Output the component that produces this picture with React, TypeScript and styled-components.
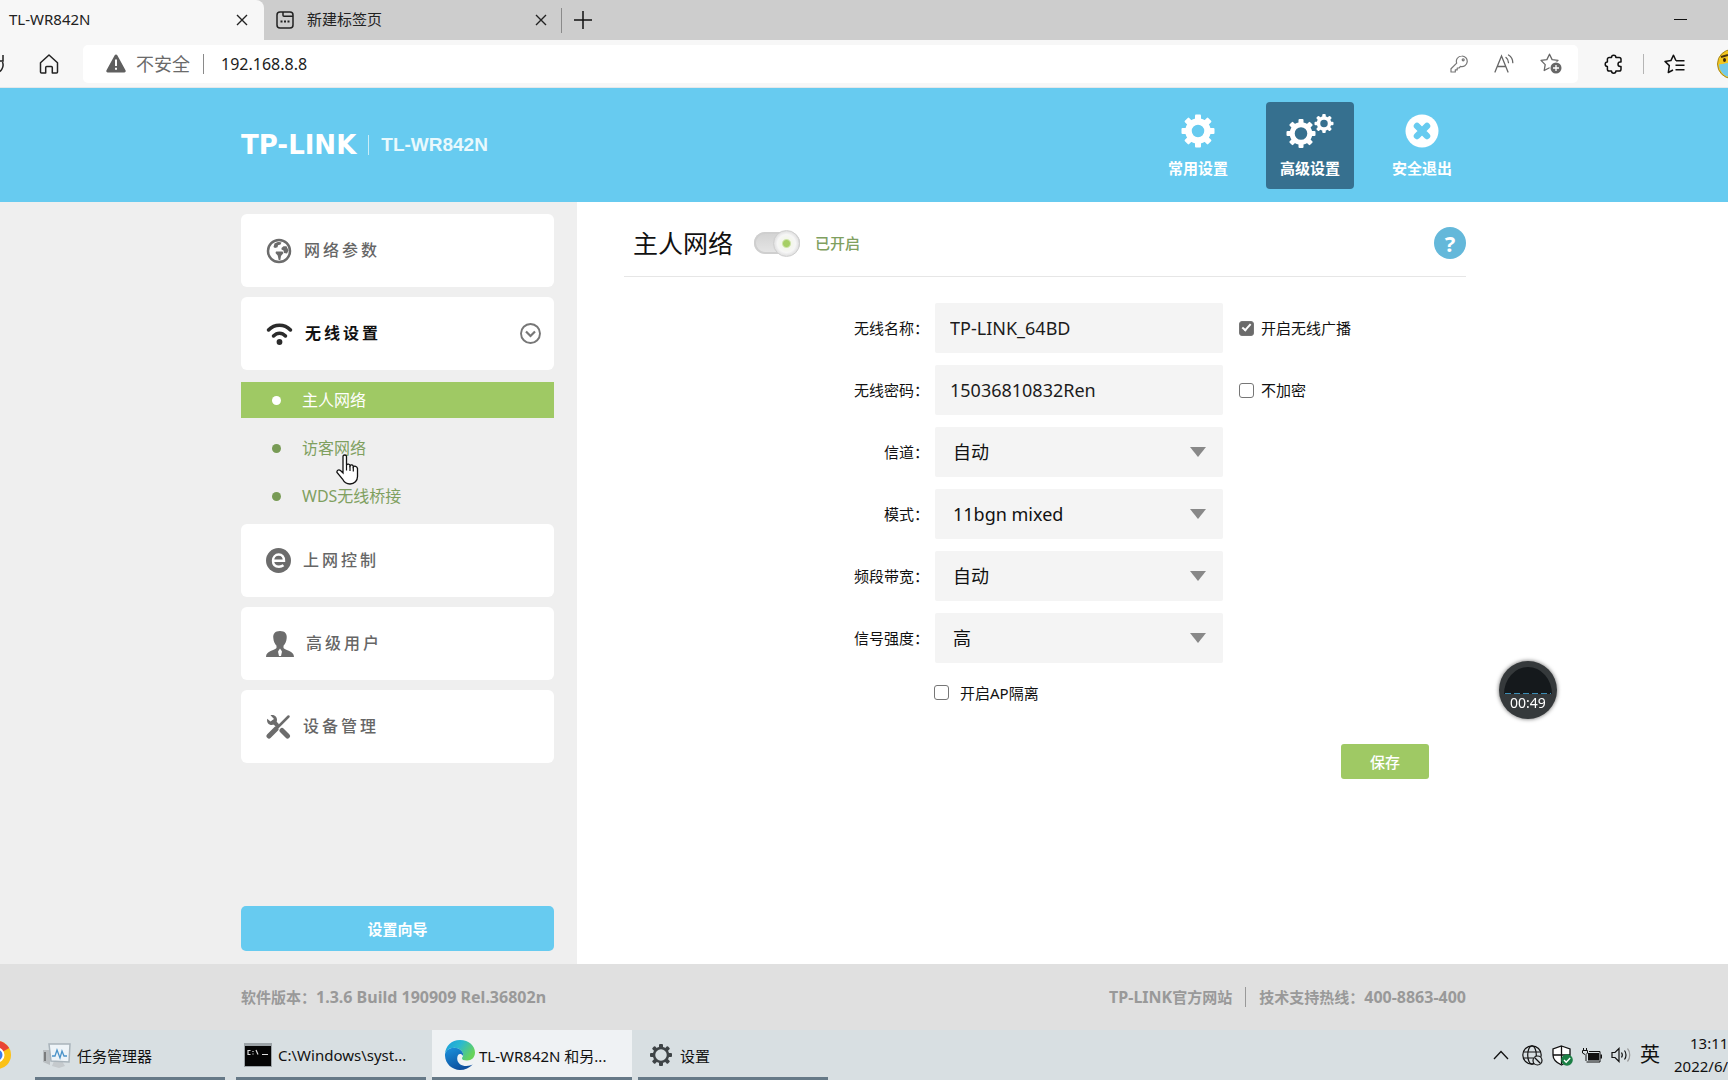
import React from "react";
import styled, { createGlobalStyle } from "styled-components";

const fonts = '"Noto Sans", "Noto Sans CJK SC", sans-serif';

const GlobalStyle = createGlobalStyle`
  *, *::before, *::after { box-sizing: border-box; }
  html, body { margin: 0; background: #fff; overflow-x: hidden; }
  body, button, input, select { font-family: ${fonts}; }
  button { border: 0; padding: 0; background: none; color: inherit; cursor: pointer; }
  a { color: inherit; text-decoration: none; }
  svg { display: block; flex: none; }
`;

const Screen = styled.div`
  display: flex;
  flex-direction: column;
  min-height: 100vh;
  overflow: hidden;
  color: #111;
  font-size: 15px;
  line-height: 20px;
`;

/* ---------- Browser ---------- */

const TabBar = styled.div`
  display: flex;
  align-items: center;
  height: 40px;
  background: #cdcdcd;
`;

const Tab = styled.div<{ $active?: boolean }>`
  display: flex;
  align-items: center;
  align-self: stretch;
  gap: 13px;
  width: ${(p) => (p.$active ? 264 : 297)}px;
  padding: 0 ${(p) => (p.$active ? 16 : 14)}px 0 ${(p) => (p.$active ? 9 : 12)}px;
  background: ${(p) => (p.$active ? "#f7f7f7" : "transparent")};
  border-radius: 0 8px 0 0;
`;

const TabTitle = styled.span`
  flex: 1;
  padding-bottom: 2px;
  color: #222;
`;

const Rule = styled.span<{ $height?: number; $color?: string }>`
  width: 1px;
  height: ${(p) => p.$height ?? 20}px;
  background: ${(p) => p.$color ?? "#8a8a8a"};
`;

const NewTab = styled.button`
  margin-left: 12px;
`;

const Minimize = styled.button`
  margin: 0 41px 0 auto;
`;

const ToolBar = styled.div`
  display: flex;
  align-items: center;
  height: 48px;
  background: #f7f7f7;
  border-bottom: 1px solid #e4e8ea;
`;

const Reload = styled.button`
  display: flex;
  justify-content: flex-end;
  width: 5px;
  overflow: hidden;
`;

const HomeButton = styled.button`
  margin: 0 24px 0 34px;
`;

const AddressBar = styled.div`
  display: flex;
  align-items: center;
  flex: 1;
  height: 38px;
  padding: 0 16px 0 23px;
  background: #fff;
  border-radius: 5px;
`;

const Insecure = styled.span`
  margin: 0 13px 0 10px;
  font-size: 18px;
  color: #6a6a6a;
`;

const AddressInput = styled.input`
  flex: 1;
  min-width: 0;
  margin-left: 17px;
  padding: 0;
  border: 0;
  outline: 0;
  font-size: 16px;
  color: #1c1c1c;
  background: transparent;
`;

const AddressTools = styled.div`
  display: flex;
  align-items: center;
  gap: 26px;
`;

const BrowserTools = styled.div`
  display: flex;
  align-items: center;
  gap: 20px;
  width: 150px;
  padding-left: 26px;
`;

const Profile = styled.button`
  width: 11px;
  margin-left: 12px;
  overflow: hidden;
`;

/* ---------- Router page ---------- */

const Header = styled.header`
  display: grid;
  grid-template-columns: minmax(241px, 1fr) minmax(0, 1225px) minmax(262px, 1fr);
  height: 114px;
  background: #67cbf0;
`;

const Footer = styled(Header).attrs({ as: "footer" })`
  height: 66px;
  background: #e0e0e0;
  color: #999;
  font-weight: 700;
`;

const Centered = styled.div`
  grid-column: 2;
  display: flex;
  align-items: center;
  justify-content: space-between;
`;

const Brand = styled.div`
  display: flex;
  align-items: center;
  color: #fff;
`;

const BrandName = styled.span`
  margin-right: 12px;
  font: 700 26px/28px "DejaVu Sans", sans-serif;
`;

const Model = styled.span`
  margin-left: 12px;
  color: #e9f9fd;
  font: 700 19px/28px "Liberation Sans", Arial, sans-serif;
`;

const TopNav = styled.nav`
  display: flex;
  gap: 24px;
`;

const TopItem = styled.button<{ $active?: boolean }>`
  display: flex;
  flex-direction: column;
  align-items: center;
  gap: 10px;
  width: 88px;
  height: 87px;
  padding-top: 12px;
  border-radius: 4px;
  background: ${(p) => (p.$active ? "#36708f" : "transparent")};
  color: #fff;
  font-size: 15px;
  font-weight: 700;
  line-height: 20px;
`;

const Body = styled.div`
  display: flex;
  flex: 1;
`;

const Sidebar = styled.aside`
  display: flex;
  flex-direction: column;
  justify-content: space-between;
  width: 577px;
  padding: 12px 23px 13px 241px;
  background: #efefef;
`;

const Menu = styled.div`
  display: flex;
  flex-direction: column;
  gap: 10px;
`;

const MenuCard = styled.button<{ $active?: boolean }>`
  display: flex;
  align-items: center;
  gap: 12px;
  height: 73px;
  padding: 0 13px 0 25px;
  border-radius: 6px;
  background: #fff;
  color: ${(p) => (p.$active ? "#111" : "#666")};
  font-size: 16px;
  font-weight: ${(p) => (p.$active ? 700 : 500)};
  letter-spacing: 3px;
  line-height: 24px;
`;

const MenuText = styled.span`
  flex: 1;
  padding-bottom: 2px;
  text-align: left;
`;

const SubMenu = styled.ul`
  display: flex;
  flex-direction: column;
  gap: 12px;
  margin: 0;
  padding: 2px 0 0;
  list-style: none;
`;

const SubLink = styled.a<{ $active?: boolean }>`
  display: flex;
  align-items: center;
  gap: 21px;
  height: 36px;
  padding-left: 31px;
  background: ${(p) => (p.$active ? "#9fc964" : "transparent")};
  color: ${(p) => (p.$active ? "#fff" : "#7fa05f")};
  font-size: 16px;

  &::before {
    content: "";
    width: 9px;
    height: 9px;
    border-radius: 50%;
    background: ${(p) => (p.$active ? "#fff" : "#789b55")};
  }
`;

const WizardButton = styled.button`
  height: 45px;
  border-radius: 5px;
  background: #67cbf0;
  color: #fff;
  font-size: 15px;
  font-weight: 700;
`;

const Main = styled.main`
  flex: 1;
  padding: 25px 262px 0 47px;
  background: #fff;
`;

const TitleRow = styled.div`
  display: flex;
  align-items: center;
  padding: 0 0 17px 9px;
  border-bottom: 1px solid #e6e6e6;
`;

const Title = styled.h1`
  margin: 0;
  font-size: 25px;
  font-weight: 400;
  line-height: 32px;
`;

const Toggle = styled.input`
  appearance: none;
  position: relative;
  width: 46px;
  height: 22px;
  margin: 0 15px 0 21px;
  border-radius: 11px;
  background: linear-gradient(#d2d2d2, #e6e6e6);
  box-shadow: inset 0 0 0 2px #cfcfcf;

  &::after {
    content: "";
    position: absolute;
    top: -2px;
    right: 0;
    width: 27px;
    height: 27px;
    border: 1px solid #cfcfcf;
    border-radius: 50%;
    background: radial-gradient(circle, #a6cf63 3px, #f3f6ea 5px, #f6f6f6 9px, #dcdcdc 13px);
  }
`;

const ToggleLabel = styled.label`
  color: #7fa05f;
  font-size: 15px;
  font-weight: 500;
`;

const HelpButton = styled.button`
  width: 32px;
  height: 32px;
  margin-left: auto;
  border-radius: 50%;
  background: #64b8da;
  color: #fff;
  font-size: 22px;
  font-weight: 700;
  line-height: 32px;
`;

const Form = styled.form`
  display: flex;
  flex-direction: column;
  gap: 12px;
  padding-top: 26px;
`;

const Row = styled.div`
  display: grid;
  grid-template-columns: 305px 288px auto;
  align-items: center;
  justify-content: start;
  column-gap: 6px;
`;

const FieldLabel = styled.label`
  text-align: right;
`;

const TextInput = styled.input`
  width: 100%;
  height: 50px;
  padding: 0 15px;
  border: 0;
  border-radius: 2px;
  background: #f4f4f4;
  color: #1c1c1c;
  font-size: 18px;
`;

const SelectBox = styled.div`
  position: relative;
`;

const Select = styled.select`
  appearance: none;
  width: 100%;
  height: 50px;
  padding: 0 18px;
  border: 0;
  border-radius: 2px;
  background: #f4f4f4;
  color: #111;
  font-size: 18px;
`;

const Arrow = styled.svg`
  position: absolute;
  top: 20px;
  right: 17px;
  pointer-events: none;
`;

const CheckLabel = styled.label<{ $gap?: number }>`
  display: flex;
  align-items: center;
  gap: ${(p) => p.$gap ?? 7}px;
`;

const SideCheck = styled.div`
  margin-left: 10px;
`;

const CheckRow = styled.div`
  display: flex;
  align-items: center;
  height: 35px;
  padding-left: 310px;
`;

const CheckBox = styled.input`
  appearance: none;
  width: 15px;
  height: 15px;
  margin: 0;
  border: 1px solid #767676;
  border-radius: 3px;
  background: #fff;

  &:checked {
    display: grid;
    place-items: center;
    background: #6b6b6b;
  }

  &:checked::after {
    content: "";
    width: 5px;
    height: 9px;
    margin-bottom: 3px;
    border: solid #fff;
    border-width: 0 2px 2px 0;
    transform: rotate(42deg);
  }
`;

const SaveButton = styled.button`
  align-self: flex-end;
  width: 88px;
  height: 35px;
  margin: 22px 37px 0 0;
  border-radius: 3px;
  background: #9fc964;
  color: #fff;
  font-size: 15px;
  font-weight: 500;
`;

const FooterLinks = styled.div`
  display: flex;
  align-items: center;
  gap: 13px;
`;

const Latin = styled.span`
  font-size: 16px;
`;

/* ---------- Task bar ---------- */

const TaskBar = styled.div`
  display: flex;
  height: 50px;
  background: #d8dfe2;
`;

const Launcher = styled.button`
  display: flex;
  align-items: center;
  justify-content: flex-end;
  width: 12px;
  margin-right: 23px;
  overflow: hidden;
`;

const Tasks = styled.div`
  display: flex;
  gap: 11px;
`;

const OpenTasks = styled(Tasks)`
  gap: 6px;
`;

const Task = styled.button<{ $active?: boolean; $gap?: number; $pad?: number }>`
  display: flex;
  align-items: center;
  gap: ${(p) => p.$gap ?? 6}px;
  width: ${(p) => (p.$active ? 200 : 190)}px;
  padding-left: ${(p) => p.$pad ?? 8}px;
  border-top: 3px solid transparent;
  border-bottom: 3px solid #667987;
  background: ${(p) => (p.$active ? "#eff2f4" : "transparent")};
  font-size: 15px;
  white-space: nowrap;
`;

const Tray = styled.div`
  display: flex;
  align-items: center;
  gap: 9px;
  margin-left: auto;
`;

const TrayChevron = styled.button`
  margin-right: 4px;
`;

const InputMode = styled.button`
  font-size: 20px;
  line-height: 24px;
`;

const Clock = styled.div`
  width: 54px;
  margin-left: 5px;
  line-height: 23px;
  white-space: nowrap;
`;

const Time = styled.div`
  padding-left: 16px;
`;

/* ---------- Overlays ---------- */

const Recorder = styled.div`
  position: fixed;
  left: 1499px;
  top: 661px;
  width: 58px;
  height: 58px;
  padding-top: 32px;
  border-radius: 50%;
  background: #35393b;
  box-shadow: 0 0 4px #666;
  color: #fff;
  font-size: 14px;
  line-height: 20px;
  text-align: center;
`;

const RecorderDial = styled.svg`
  position: absolute;
  left: 0;
  top: 0;
`;

const RecorderTime = styled.span`
  position: relative;
`;

const Pointer = styled.svg`
  position: fixed;
  left: 336px;
  top: 454px;
`;

/* ---------- Icons ---------- */

const CloseIcon = () => (
  <svg width="12" height="12" viewBox="0 0 12 12" fill="none" stroke="#222" strokeWidth="1.4">
    <path d="M1 1l10 10M11 1L1 11" />
  </svg>
);

const NewPageIcon = () => (
  <svg width="18" height="18" viewBox="0 0 18 18" fill="none" stroke="#222" strokeWidth="1.5">
    <rect x="1" y="1" width="16" height="16" rx="3" />
    <path d="M7 1v3.2a1 1 0 001 1h9" />
    <path d="M4.500 10.500h2M8 10.500h2M11.500 10.500h2" strokeWidth="2" />
  </svg>
);

const HomeIcon = () => (
  <svg width="20" height="20" viewBox="0 0 20 20" fill="none" stroke="#222" strokeWidth="1.5" strokeLinejoin="round">
    <path d="M1.500 8.800L10 1l8.500 7.800V18a1 1 0 01-1 1h-4.200v-5.500a1 1 0 00-1-1H7.700a1 1 0 00-1 1V19H2.500a1 1 0 01-1-1z" />
  </svg>
);

const ReloadIcon = () => (
  <svg width="20" height="20" viewBox="0 0 20 20" fill="none" stroke="#222" strokeWidth="1.5">
    <path d="M17.500 8c2 5-1.500 11-7.500 11M18 1v6h-5" />
  </svg>
);

const WarningIcon = () => (
  <svg width="20" height="19" viewBox="0 0 20 19">
    <path d="M8.700 1.200a1.500 1.500 0 012.600 0l8.200 15a1.500 1.500 0 01-1.300 2.300H1.800a1.500 1.500 0 01-1.300-2.300z" fill="#5f5f5f" />
    <path d="M10 5.500v6.500M10 13.700v2" stroke="#fff" strokeWidth="2" />
  </svg>
);

const KeyIcon = () => (
  <svg width="18" height="18" viewBox="0 0 18 18" fill="none" stroke="#777" strokeWidth="1.2" strokeLinejoin="round">
    <path d="M11.700 1a5.300 5.300 0 11-1.200 10.400L9 13H7.200v1.900H5.300V17H1v-3.300l5.700-5.600A5.300 5.300 0 0111.700 1z" />
    <circle cx="13.200" cy="4.800" r="1" />
  </svg>
);

const ReadAloudIcon = () => (
  <svg width="20" height="19" viewBox="0 0 20 19" fill="none" stroke="#666" strokeWidth="1.3" strokeLinecap="round">
    <path d="M1 18L7.500 2 14 18M3.300 12.500h8.400" />
    <path d="M12 3.500c1.600 1.200 2.500 3 2.500 5.200M14.500 1c2.800 1.700 4.300 4.300 4.300 7.700" />
  </svg>
);

const AddStarIcon = () => (
  <svg width="22" height="21" viewBox="0 0 22 21">
    <path
      d="M9.500 1.200l2.600 5.400 5.900.8-4.300 4.200 1 5.900-5.200-2.800-5.300 2.800 1-5.900L1 7.400l5.900-.8z"
      fill="none"
      stroke="#666"
      strokeWidth="1.300"
      strokeLinejoin="round"
    />
    <circle cx="16" cy="15" r="6.500" fill="#fff" />
    <circle cx="16" cy="15" r="5.500" fill="#666" />
    <path d="M13 15h6M16 12v6" stroke="#fff" strokeWidth="1.300" />
  </svg>
);

const PuzzleIcon = () => (
  <svg width="19" height="20" viewBox="0 0 19 20" fill="none" stroke="#111" strokeWidth="1.500" strokeLinejoin="round">
    <path d="M7.500 3.500a2.200 2.200 0 014.400 0h3.300a1.800 1.800 0 011.800 1.800V8h-.8a2.200 2.200 0 000 4.400h.8v2.800a1.800 1.800 0 01-1.800 1.800h-3.300a2.200 2.200 0 01-4.400 0H5.200a1.800 1.800 0 01-1.800-1.800v-2.800a2.200 2.200 0 010-4.400V5.300a1.800 1.800 0 011.800-1.800z" />
  </svg>
);

const FavoritesIcon = () => (
  <svg width="21" height="20" viewBox="0 0 21 20" fill="none" stroke="#111" strokeWidth="1.500" strokeLinejoin="round">
    <path d="M12 6.700L9.500 1.200 6.900 6.600 1 7.400l4.300 4.200-1 6.900L9 16M12 6.700h8.500M11.500 11.200h9M11.500 15.700h9" />
  </svg>
);

const AvatarIcon = () => (
  <svg width="30" height="30" viewBox="0 0 30 30">
    <circle cx="15" cy="15" r="14.500" fill="#f4c61f" stroke="#a5861c" />
    <path d="M2 15c3 1 5-1 10-1v14C6 27 2 21 2 15z" fill="#73c9ea" />
    <path d="M4 8l7-2" stroke="#4a3510" strokeWidth="2" />
    <ellipse cx="7.500" cy="11" rx="1.500" ry="2" fill="#3b2a0c" />
  </svg>
);

type GearProps = { cx: number; cy: number; r: number; ring: number; width: number; tooth: number; color?: string };

const Gear = ({ cx, cy, r, ring, width, tooth, color = "#fff" }: GearProps) => (
  <g>
    <circle cx={cx} cy={cy} r={ring} fill="none" stroke={color} strokeWidth={width} />
    {[0, 45, 90, 135, 180, 225, 270, 315].map((angle) => (
      <rect
        key={angle}
        x={cx - tooth / 2}
        y={cy - r}
        width={tooth}
        height={r - ring}
        rx="1"
        fill={color}
        transform={`rotate(${angle} ${cx} ${cy})`}
      />
    ))}
  </g>
);

const BasicIcon = () => (
  <svg width="34" height="34" viewBox="0 0 34 34">
    <Gear cx={17} cy={17} r={16.5} ring={9.5} width={6.5} tooth={6} />
  </svg>
);

const AdvancedIcon = () => (
  <svg width="48" height="34" viewBox="0 0 48 34">
    <Gear cx={15} cy={19.5} r={14.5} ring={8.8} width={5} tooth={5} />
    <Gear cx={38} cy={9.5} r={9.5} ring={5.5} width={3.5} tooth={3.5} />
  </svg>
);

const ExitIcon = () => (
  <svg width="34" height="34" viewBox="0 0 34 34">
    <circle cx="17" cy="17" r="16.500" fill="#fff" />
    <path d="M12 12l10 10M22 12L12 22" stroke="#67cbf0" strokeWidth="6.500" strokeLinecap="round" />
  </svg>
);

const GlobeIcon = () => (
  <svg width="26" height="26" viewBox="0 0 26 26" fill="#6c6c6c">
    <circle cx="13" cy="13" r="11" fill="none" stroke="#6c6c6c" strokeWidth="2.500" />
    <path d="M8.500 5.500c2-1.500 5-2 7-1l-1 2-2.500.8-.5 2-2.500.7L7.500 9z" />
    <path d="M10 13.500h6.500l1 1.500-2.500 3-.7 4h-1.600l-1-4.500L9.500 15z" />
    <path d="M15.500 10l2-1.800h3l2 4.300-1.500 3-3-.5-.5-2.500-2-1z" />
  </svg>
);

const WifiIcon = () => (
  <svg width="27" height="24" viewBox="0 0 27 24" fill="none" stroke="#2b2b2b" strokeWidth="3.500" strokeLinecap="round">
    <path d="M2.500 8c6-6.500 16-6.500 22 0M7.500 14c3.600-3.800 8.400-3.800 12 0" />
    <circle cx="13.500" cy="20" r="2.900" fill="#2b2b2b" stroke="none" />
  </svg>
);

const ExpandIcon = () => (
  <svg width="21" height="21" viewBox="0 0 21 21" fill="none" stroke="#777">
    <circle cx="10.500" cy="10.500" r="9.500" strokeWidth="1.900" />
    <path d="M6 8.500l4.500 4.500L15 8.500" strokeWidth="2.200" />
  </svg>
);

const InternetIcon = () => (
  <svg width="25" height="25" viewBox="0 0 25 25">
    <circle cx="12.500" cy="12.500" r="12.500" fill="#6c6c6c" />
    <path d="M7 12.700h11c0-4-2-6.200-5.300-6.200S7 9 7 12.700c0 3.800 2.300 6 6 6 1.800 0 3.300-.5 4.500-1.400" fill="none" stroke="#fff" strokeWidth="2.400" />
  </svg>
);

const UserIcon = () => (
  <svg width="28" height="26" viewBox="0 0 28 26" fill="#6c6c6c">
    <path d="M14 0c5 0 7.200 2.800 6.700 7-.3 3.500-1.500 6-3.200 7.700V17c1.500 2.300 10.500 2.500 10.500 9H0c0-6.500 9-6.700 10.500-9v-2.300C8.800 13 7.600 10.500 7.300 7 6.800 2.800 9 0 14 0z" />
    <path d="M14 17.500l2 3-1 4.500h-2l-1-4.500z" fill="#fff" />
  </svg>
);

const ToolsIcon = () => (
  <svg width="25" height="25" viewBox="0 0 25 25" fill="none" stroke="#6c6c6c" strokeLinecap="round">
    <path d="M22.500 2.500L12 13" strokeWidth="2.500" />
    <path d="M10 15l-7 7" strokeWidth="5" />
    <path d="M16 16.500l5.500 5.500" strokeWidth="5" />
    <path d="M8 8l3 3" strokeWidth="4" />
    <path d="M4.500 1.200c3-1 6.500 1 6.500 4.600 0 3-2.300 5.200-5.200 5.200C2.500 11 .4 8 1.200 4.700l3.300 2.900L8 5z" fill="#6c6c6c" stroke="none" />
  </svg>
);

const ChromeIcon = () => (
  <svg width="30" height="30" viewBox="0 0 30 30">
    <circle cx="15" cy="15" r="14" fill="#fbc116" />
    <path d="M15 15L3 8a14 14 0 0124.200 0z" fill="#e94335" />
    <circle cx="15" cy="15" r="7.500" fill="#fff" />
    <circle cx="15" cy="15" r="5.500" fill="#3b7ded" />
  </svg>
);

const TaskManagerIcon = () => (
  <svg width="28" height="25" viewBox="0 0 28 25">
    <path d="M0 7h7v15l-7-3z" fill="#b9bec1" />
    <path d="M2 9v9" stroke="#666" strokeWidth="1.500" />
    <path d="M11 18h8l3 5-6 2-7-2z" fill="#c5cacd" />
    <path d="M6 1h21l-1 18-18-1z" fill="#eef4f8" stroke="#a9b4bb" strokeWidth="1.500" />
    <path d="M9 13h3l2-6 3 8 2-7 2 5h3" fill="none" stroke="#4a93c9" strokeWidth="1.300" />
  </svg>
);

const TerminalIcon = () => (
  <svg width="28" height="24" viewBox="0 0 28 24">
    <rect width="28" height="24" fill="#9ca3a7" />
    <rect x="1" y="3" width="26" height="20" fill="#050505" />
    <path d="M6.500 7.500H4v4h2.500M9 8v1M9 10.500v1M12 7l2 4.500M18 11.500h6" stroke="#ddd" strokeWidth="1.200" fill="none" />
  </svg>
);

const EdgeIcon = () => (
  <svg width="30" height="30" viewBox="0 0 30 30">
    <defs>
      <linearGradient id="edgeTop" x1="0" y1="0" x2="1" y2="0.500">
        <stop offset="0" stopColor="#189cdf" />
        <stop offset="0.500" stopColor="#2bb9cf" />
        <stop offset="1" stopColor="#67d35a" />
      </linearGradient>
      <linearGradient id="edgeBottom" x1="0" y1="0" x2="0.500" y2="1">
        <stop offset="0" stopColor="#1b93dd" />
        <stop offset="1" stopColor="#0d4f9e" />
      </linearGradient>
    </defs>
    <path d="M0 14C.5 6 6.500 0 15 0c9 0 15 6 15 12.500 0 5-3.500 8-8 8-3.500 0-5-1-5-2.300 0-1 1.200-1.500 1.200-3.500 0-3.500-4-7-9-7C4.500 7.700 1 10.500 0 14z" fill="url(#edgeTop)" />
    <path d="M0 14c1-4 4.500-6.300 9.200-6.300 5 0 9 3.500 9 7 0 .5-.1 1-.2 1.300-.8-1.500-1.800-2-2.800-2-2 0-3 2-3 4.500 0 5 4.500 7.500 9 7.500 3 0 5-.8 6.500-1.500C24.500 28 20 30 15 30 6.500 30-.5 23 0 14z" fill="url(#edgeBottom)" />
  </svg>
);

const SettingsIcon = () => (
  <svg width="22" height="22" viewBox="0 0 22 22">
    <Gear cx={11} cy={11} r={11} ring={7} width={2.5} tooth={4} color="#3f4447" />
  </svg>
);

const ChevronUpIcon = () => (
  <svg width="16" height="10" viewBox="0 0 16 10" fill="none" stroke="#111" strokeWidth="1.300">
    <path d="M1 9l7-7.500L15 9" />
  </svg>
);

const NetworkIcon = () => (
  <svg width="21" height="21" viewBox="0 0 21 21" fill="none" stroke="#111" strokeWidth="1.200">
    <circle cx="10" cy="10" r="9.200" />
    <ellipse cx="10" cy="10" rx="4.300" ry="9.200" />
    <path d="M1.500 7h17M1.500 13h10" />
    <circle cx="15.500" cy="15.500" r="4.500" fill="#d8dfe2" />
    <path d="M12.500 12.500l6 6" />
  </svg>
);

const ShieldIcon = () => (
  <svg width="21" height="21" viewBox="0 0 21 21">
    <path d="M9.500 1l8.500 3v6c0 5-4 8-8.500 10C5 18 1 15 1 10V4z" fill="#fff" stroke="#111" strokeWidth="1.300" />
    <path d="M9.500 1v18M1 10h17" stroke="#111" strokeWidth="1.300" />
    <circle cx="15" cy="15" r="5.800" fill="#1b7f45" />
    <path d="M12 15l2.200 2.200 4-4.200" fill="none" stroke="#fff" strokeWidth="1.400" />
  </svg>
);

const BatteryIcon = () => (
  <svg width="20" height="15" viewBox="0 0 20 15">
    <path d="M1.500 0v3M4.500 0v3" stroke="#111" />
    <path d="M.5 2.500h5V5L4 6.500V13M.5 2.500V5L3 6.500" fill="none" stroke="#111" />
    <rect x="6" y="5" width="11" height="7.500" fill="#111" />
    <path d="M7 3.500h11v10.500H4.500" fill="none" stroke="#111" />
    <rect x="18.500" y="6.500" width="1.500" height="4" fill="#111" />
  </svg>
);

const VolumeIcon = () => (
  <svg width="20" height="16" viewBox="0 0 20 16" fill="none" stroke="#111" strokeWidth="1.200">
    <path d="M1 5.500h3L8 1.500v13l-4-4H1z" />
    <path d="M10.500 5.500c1 1.500 1 3.500 0 5M13.500 3.500c2 2.500 2 6.500 0 9" />
    <path d="M16.500 1.500c3 3.500 3 9.500 0 13" stroke="#999" />
  </svg>
);

/* ---------- Data ---------- */

const selectFields = [
  { id: "channel", label: "信道：", value: "自动" },
  { id: "mode", label: "模式：", value: "11bgn mixed" },
  { id: "bandwidth", label: "频段带宽：", value: "自动" },
  { id: "power", label: "信号强度：", value: "高" },
];

const laterMenu = [
  { text: "上网控制", icon: <InternetIcon /> },
  { text: "高级用户", icon: <UserIcon /> },
  { text: "设备管理", icon: <ToolsIcon /> },
];

export default function App() {
  return (
    <Screen>
      <GlobalStyle />
      <TabBar>
        <Tab $active>
          <TabTitle>TL-WR842N</TabTitle>
          <button aria-label="关闭标签页"><CloseIcon /></button>
        </Tab>
        <Tab>
          <NewPageIcon />
          <TabTitle>新建标签页</TabTitle>
          <button aria-label="关闭标签页"><CloseIcon /></button>
        </Tab>
        <Rule $height={25} />
        <NewTab aria-label="新建标签页">
          <svg width="18" height="18" viewBox="0 0 18 18" stroke="#111" strokeWidth="1.500">
            <path d="M9 0v18M0 9h18" />
          </svg>
        </NewTab>
        <Minimize aria-label="最小化">
          <svg width="13" height="2" viewBox="0 0 13 2"><rect width="13" height="1" fill="#111" /></svg>
        </Minimize>
      </TabBar>
      <ToolBar>
        <Reload aria-label="刷新"><ReloadIcon /></Reload>
        <HomeButton aria-label="主页"><HomeIcon /></HomeButton>
        <AddressBar>
          <WarningIcon />
          <Insecure>不安全</Insecure>
          <Rule />
          <AddressInput aria-label="地址" defaultValue="192.168.8.8" />
          <AddressTools>
            <button aria-label="密码"><KeyIcon /></button>
            <button aria-label="大声朗读"><ReadAloudIcon /></button>
            <button aria-label="添加到收藏夹"><AddStarIcon /></button>
          </AddressTools>
        </AddressBar>
        <BrowserTools>
          <button aria-label="扩展"><PuzzleIcon /></button>
          <Rule $color="#b5b5b5" />
          <button aria-label="收藏夹"><FavoritesIcon /></button>
          <Profile aria-label="个人资料"><AvatarIcon /></Profile>
        </BrowserTools>
      </ToolBar>

      <Header>
        <Centered>
          <Brand>
            <BrandName>TP-LINK</BrandName>
            <Rule $color="#c9edf8" />
            <Model>TL-WR842N</Model>
          </Brand>
          <TopNav>
            <TopItem><BasicIcon />常用设置</TopItem>
            <TopItem $active><AdvancedIcon />高级设置</TopItem>
            <TopItem><ExitIcon />安全退出</TopItem>
          </TopNav>
        </Centered>
      </Header>

      <Body>
        <Sidebar>
          <Menu>
            <MenuCard><GlobeIcon /><MenuText>网络参数</MenuText></MenuCard>
            <MenuCard $active><WifiIcon /><MenuText>无线设置</MenuText><ExpandIcon /></MenuCard>
            <SubMenu>
              <li><SubLink href="#main" $active>主人网络</SubLink></li>
              <li><SubLink href="#guest">访客网络</SubLink></li>
              <li><SubLink href="#wds">WDS无线桥接</SubLink></li>
            </SubMenu>
            {laterMenu.map((item) => (
              <MenuCard key={item.text}>{item.icon}<MenuText>{item.text}</MenuText></MenuCard>
            ))}
          </Menu>
          <WizardButton>设置向导</WizardButton>
        </Sidebar>
        <Main>
          <TitleRow>
            <Title>主人网络</Title>
            <Toggle type="checkbox" id="enabled" defaultChecked />
            <ToggleLabel htmlFor="enabled">已开启</ToggleLabel>
            <HelpButton aria-label="帮助">?</HelpButton>
          </TitleRow>
          <Form>
            <Row>
              <FieldLabel htmlFor="ssid">无线名称：</FieldLabel>
              <TextInput id="ssid" defaultValue="TP-LINK_64BD" />
              <SideCheck>
                <CheckLabel><CheckBox type="checkbox" defaultChecked />开启无线广播</CheckLabel>
              </SideCheck>
            </Row>
            <Row>
              <FieldLabel htmlFor="password">无线密码：</FieldLabel>
              <TextInput id="password" defaultValue="15036810832Ren" />
              <SideCheck>
                <CheckLabel><CheckBox type="checkbox" />不加密</CheckLabel>
              </SideCheck>
            </Row>
            {selectFields.map((field) => (
              <Row key={field.id}>
                <FieldLabel htmlFor={field.id}>{field.label}</FieldLabel>
                <SelectBox>
                  <Select id={field.id}><option>{field.value}</option></Select>
                  <Arrow width="16" height="10" viewBox="0 0 16 10"><path d="M0 0h16L8 10z" fill="#888" /></Arrow>
                </SelectBox>
              </Row>
            ))}
            <CheckRow>
              <CheckLabel $gap={11}><CheckBox type="checkbox" />开启AP隔离</CheckLabel>
            </CheckRow>
            <SaveButton type="button">保存</SaveButton>
          </Form>
        </Main>
      </Body>

      <Footer>
        <Centered>
          <span>软件版本：<Latin>1.3.6 Build 190909 Rel.36802n</Latin></span>
          <FooterLinks>
            <a href="#site"><Latin>TP-LINK</Latin>官方网站</a>
            <Rule $color="#999" />
            <span>技术支持热线：<Latin>400-8863-400</Latin></span>
          </FooterLinks>
        </Centered>
      </Footer>

      <TaskBar>
        <Launcher aria-label="Chrome"><ChromeIcon /></Launcher>
        <Tasks>
          <Task><TaskManagerIcon />任务管理器</Task>
          <OpenTasks>
            <Task><TerminalIcon />C:\Windows\syst...</Task>
            <Task $active $gap={4} $pad={13}><EdgeIcon />TL-WR842N 和另...</Task>
            <Task $gap={8} $pad={12}><SettingsIcon />设置</Task>
          </OpenTasks>
        </Tasks>
        <Tray>
          <TrayChevron aria-label="显示隐藏的图标"><ChevronUpIcon /></TrayChevron>
          <NetworkIcon />
          <ShieldIcon />
          <BatteryIcon />
          <VolumeIcon />
          <InputMode>英</InputMode>
          <Clock>
            <Time>13:11</Time>
            <div>2022/6/</div>
          </Clock>
        </Tray>
      </TaskBar>

      <Recorder>
        <RecorderDial width="58" height="58" viewBox="0 0 58 58">
          <path d="M5 33a24 27 0 1148 0z" fill="#15191c" />
          <path d="M6 32.500h46" stroke="#3b8db5" strokeDasharray="6 3" />
        </RecorderDial>
        <RecorderTime>00:49</RecorderTime>
      </Recorder>
      <Pointer width="24" height="31" viewBox="0 0 24 31">
        <path
          d="M7 2.500c0-2 3.500-2 3.500 0V11c.8-1.500 3.300-1.200 3.500.8.900-1.500 3.200-1 3.300 1 1-1.200 3.700-.8 4.200 1.700v8c0 4-3 7.500-7.500 7.500-4 0-6-2-7.500-5L1 18.500c-.5-2 1.500-3.500 3.500-2L7 19z"
          fill="#fff"
          stroke="#111"
          strokeWidth="1.300"
        />
        <path d="M10.500 11v5.500M14 12v5M17.300 13v4.500" stroke="#111" strokeWidth="1.200" />
      </Pointer>
    </Screen>
  );
}
